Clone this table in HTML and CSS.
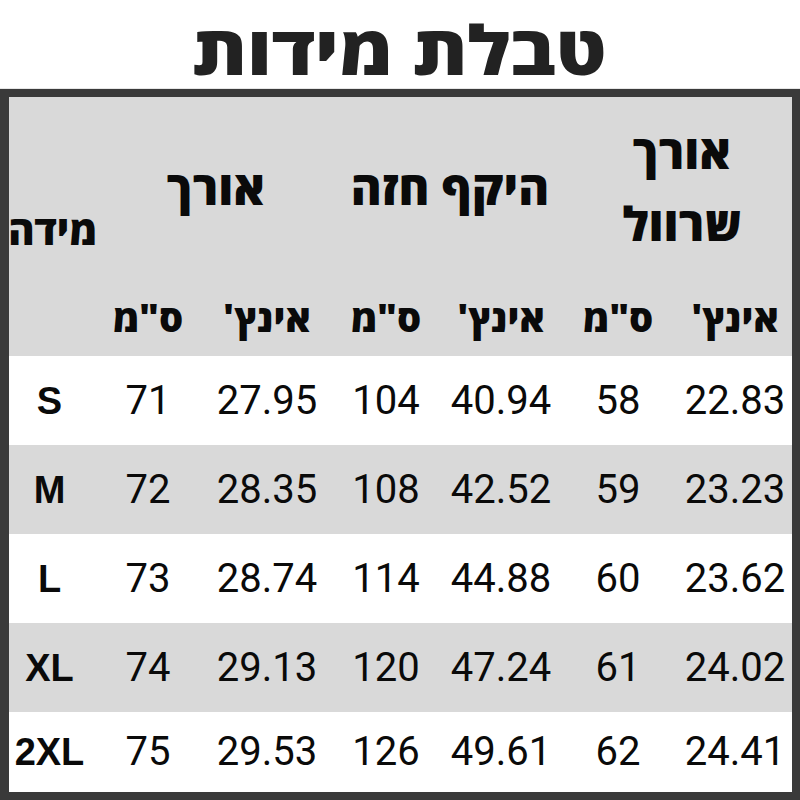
FILE: index.html
```html
<!DOCTYPE html>
<html lang="he" dir="rtl">
<head>
<meta charset="utf-8">
<title>טבלת מידות</title>
<link rel="stylesheet" href="styles.css">
</head>
<body>
<h1 class="title"><span class="title-text">טבלת מידות</span></h1>
<div class="frame">
  <table class="sizes">
    <colgroup>
      <col class="c1"><col class="c2"><col class="c3"><col class="c4"><col class="c5"><col class="c6"><col class="c7">
    </colgroup>
    <thead>
      <tr class="head1">
        <th colspan="2" class="group">אורך<br>שרוול</th>
        <th colspan="2" class="group">היקף חזה</th>
        <th colspan="2" class="group">אורך</th>
        <th rowspan="2" class="size-head"><span class="size-label">מידה</span></th>
      </tr>
      <tr class="head2">
        <th>אינץ'</th><th>ס"מ</th><th>אינץ'</th><th>ס"מ</th><th>אינץ'</th><th>ס"מ</th>
      </tr>
    </thead>
    <tbody>
      <tr class="row light"><td>22.83</td><td>58</td><td>40.94</td><td>104</td><td>27.95</td><td>71</td><td class="size">S</td></tr>
      <tr class="row grey"><td>23.23</td><td>59</td><td>42.52</td><td>108</td><td>28.35</td><td>72</td><td class="size">M</td></tr>
      <tr class="row light"><td>23.62</td><td>60</td><td>44.88</td><td>114</td><td>28.74</td><td>73</td><td class="size">L</td></tr>
      <tr class="row grey"><td>24.02</td><td>61</td><td>47.24</td><td>120</td><td>29.13</td><td>74</td><td class="size">XL</td></tr>
      <tr class="row light last"><td>24.41</td><td>62</td><td>49.61</td><td>126</td><td>29.53</td><td>75</td><td class="size">2XL</td></tr>
    </tbody>
  </table>
</div>
</body>
</html>
```

FILE: styles.css
```css
* { box-sizing: border-box; }
html, body {
  margin: 0;
  padding: 0;
  background: #ffffff;
  width: 800px;
  height: 800px;
  overflow: hidden;
}
.title {
  margin: 0;
  height: 89px;
  padding-top: 15px;
  font-family: "Open Sans", "Liberation Sans", sans-serif;
  font-weight: 800;
  font-size: 68px;
  line-height: 68px;
  color: #222222;
  text-align: center;
  border-bottom: 1px solid #e6e6e6;
}
.title-text {
  display: inline-block;
  transform: scaleX(1.14);
}
.frame {
  height: 711px;
  border-style: solid;
  border-color: #3a3a3a;
  border-width: 8px 8px 8px 9px;
  overflow: hidden;
  background: #ffffff;
}
.sizes {
  width: 783px;
  border-collapse: collapse;
  table-layout: fixed;
}
.c1 { width: 114px; }
.c2 { width: 120px; }
.c3 { width: 114px; }
.c4 { width: 116px; }
.c5 { width: 122px; }
.c6 { width: 116px; }
.c7 { width: 81px; }
.sizes th, .sizes td {
  padding: 0;
  text-align: center;
  vertical-align: middle;
  white-space: nowrap;
}
thead {
  background: #d9d9d9;
}
.sizes th {
  font-family: "Open Sans", "Liberation Sans", sans-serif;
  font-weight: 800;
  color: #0a0a0a;
}
.head1 { height: 180px; }
.head1 th {
  font-size: 47px;
  line-height: 72px;
}
.head1 th.group {
  padding-left: 14px;
}
.head2 { height: 79px; }
.head2 th {
  font-size: 38px;
  line-height: 44px;
}
.size-head {
  text-align: right;
}
.size-label {
  display: inline-block;
  font-size: 40px;
  line-height: 44px;
  margin-right: -7px;
}
.row { height: 89px; }
.row.last { height: 80px; }
.row.grey { background: #d9d9d9; }
.row.light { background: #ffffff; }
.sizes td {
  font-family: Roboto, "Liberation Sans", sans-serif;
  font-weight: 400;
  font-size: 40px;
  line-height: 48px;
  color: #0a0a0a;
}
.sizes td.size {
  font-family: "Liberation Sans", Arial, sans-serif;
  font-weight: 700;
  font-size: 38px;
}
```
